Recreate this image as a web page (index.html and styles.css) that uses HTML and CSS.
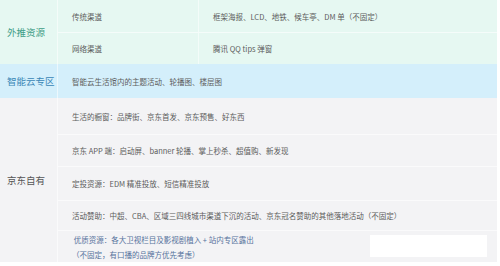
FILE: index.html
```html
<!DOCTYPE html>
<html lang="zh-CN">
<head>
<meta charset="utf-8">
<title>资源表</title>
<link rel="stylesheet" href="styles.css">
</head>
<body>
<div class="table">
  <div class="section green">
    <div class="label">外推资源</div>
    <div class="rows">
      <div class="row sub h32"><div class="sub-name">传统渠道</div><div class="cell">框架海报、LCD、地铁、候车亭、DM 单（不固定）</div></div>
      <div class="row sub h32 sep"><div class="sub-name">网络渠道</div><div class="cell">腾讯 QQ tips 弹窗</div></div>
    </div>
  </div>
  <div class="section blue">
    <div class="label">智能云专区</div>
    <div class="rows">
      <div class="row h34"><div class="cell">智能云生活馆内的主题活动、轮播图、楼层图</div></div>
    </div>
  </div>
  <div class="section gray">
    <div class="label dark">京东自有</div>
    <div class="rows">
      <div class="row h36"><div class="cell">生活的橱窗：品牌街、京东首发、京东预售、好东西</div></div>
      <div class="row h32 sep"><div class="cell">京东 APP 端：启动屏、banner 轮播、掌上秒杀、超值购、新发现</div></div>
      <div class="row h34 sep"><div class="cell">定投资源：EDM 精准投放、短信精准投放</div></div>
      <div class="row h30 sep"><div class="cell">活动赞助：中超、CBA、区域三四线城市渠道下沉的活动、京东冠名赞助的其他落地活动（不固定）</div></div>
      <div class="row h32 sep"><div class="cell multi blue-text"><span>&nbsp;优质资源：各大卫视栏目及影视剧植入 + 站内专区露出</span><span>（不固定，有口播的品牌方优先考虑）</span></div></div>
    </div>
  </div>
  <div class="cover"></div>
</div>
</body>
</html>
```

FILE: styles.css
```css
html, body {
  margin: 0;
  padding: 0;
  background: #ffffff;
}

body {
  width: 500px;
  height: 266px;
  overflow: hidden;
  font-family: "Noto Sans CJK SC", "Noto Sans", sans-serif;
}

.table {
  position: relative;
  width: 497px;
  display: flex;
  flex-direction: column;
}

.section {
  display: grid;
  grid-template-columns: 58px 1fr;
}

.green { background: #e6f8f2; }
.blue { background: #d4effb; }
.gray { background: #f3f3f5; }

.label {
  display: flex;
  align-items: center;
  padding-left: 7px;
  font-size: 9.5px;
  white-space: nowrap;
  border-right: 1px solid rgba(255, 255, 255, 0.55);
}

.green .label { color: #3f9d86; }
.blue .label { color: #3a86b6; }
.label.dark { color: #555555; }

.rows {
  display: flex;
  flex-direction: column;
}

.row {
  display: flex;
  align-items: center;
}

.row.sep {
  border-top: 1px solid rgba(255, 255, 255, 0.6);
}

.h30 { height: 30px; }
.h32 { height: 32px; }
.h34 { height: 34px; }
.h36 { height: 36px; }
.row.sep.h30 { height: 29px; }
.row.sep.h32 { height: 31px; }
.row.sep.h34 { height: 33px; }

.sub {
  display: grid;
  grid-template-columns: 141px 1fr;
  align-items: stretch;
}

.sub-name,
.cell {
  display: flex;
  align-items: center;
  padding-left: 14px;
  font-size: 7.5px;
  color: #5c5c5c;
  white-space: nowrap;
}

.sub-name {
  border-right: 1px solid rgba(255, 255, 255, 0.5);
}

.cell.multi {
  flex-direction: column;
  align-items: flex-start;
  justify-content: center;
  line-height: 15px;
}

.blue-text { color: #56729c; }

.cover {
  position: absolute;
  left: 370px;
  top: 235px;
  width: 117px;
  height: 22px;
  background: #ffffff;
}
```
